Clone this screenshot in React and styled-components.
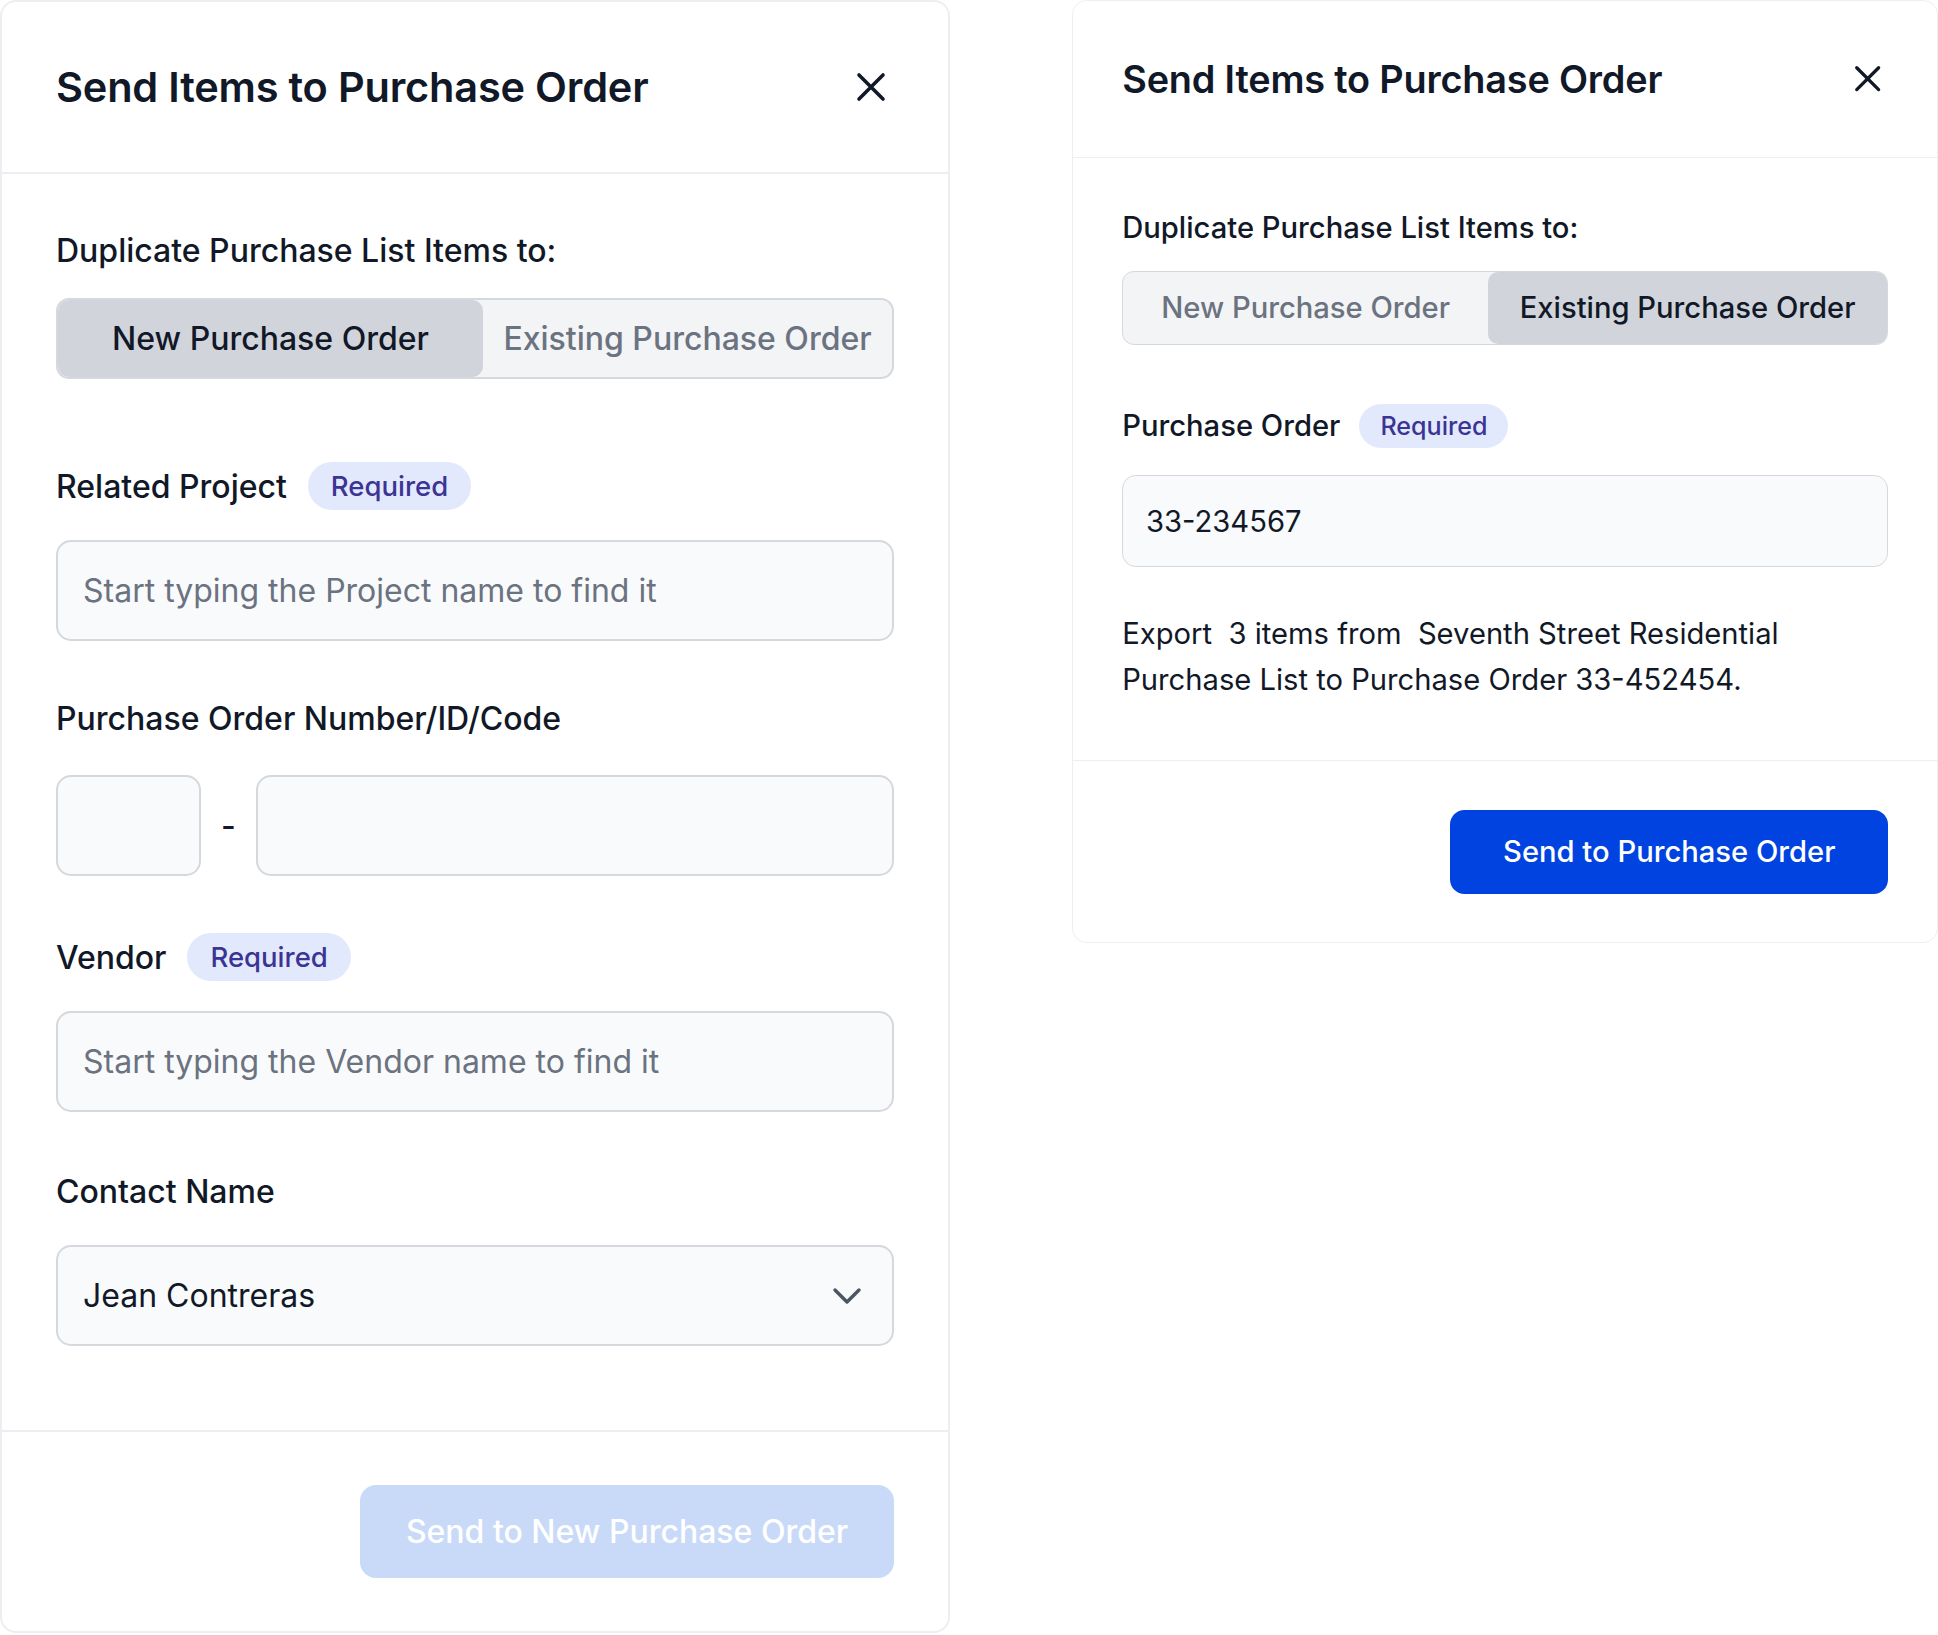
import React from "react";
import styled, { createGlobalStyle } from "styled-components";

const GlobalStyle = createGlobalStyle`
  html, body {
    margin: 0;
    padding: 0;
    background: #ffffff;
    overflow: hidden;
  }
  body {
    font-family: Inter, "Noto Sans", "Liberation Sans", sans-serif;
    color: #111827;
    -webkit-font-smoothing: antialiased;
  }
`;

const CloseIcon = () => (
  <svg width="30" height="30" viewBox="0 0 30 30" fill="none">
    <path d="M3 3 L27 27 M27 3 L3 27" stroke="#111827" strokeWidth="3.6" strokeLinecap="round" />
  </svg>
);

const ChevronIcon = () => (
  <svg width="30" height="18" viewBox="0 0 30 18" fill="none">
    <path d="M3 3 L15 15 L27 3" stroke="#4b5563" strokeWidth="3.4" strokeLinecap="round" strokeLinejoin="round" />
  </svg>
);

const summaryText =
  "Export\u00a0 3 items from\u00a0 Seventh Street Residential Purchase List to Purchase Order 33-452454.";

const NewOrderDialog = () => (
  <Panel $height={1633}>
    <Header>
      <Title>Send Items to Purchase Order</Title>
      <CloseButton aria-label="Close">
        <CloseIcon />
      </CloseButton>
    </Header>
    <Body $padBottom={84}>
      <LabelRow>
        <Label>Duplicate Purchase List Items to:</Label>
      </LabelRow>
      <Segmented $first={425} $gap={24}>
        <Segment $active>New Purchase Order</Segment>
        <Segment>Existing Purchase Order</Segment>
      </Segmented>

      <Field $top={83}>
        <LabelRow>
          <Label>Related Project</Label>
          <Badge>Required</Badge>
        </LabelRow>
        <InputBox>
          <Placeholder>Start typing the Project name to find it</Placeholder>
        </InputBox>
      </Field>

      <Field $top={53} $gap={33}>
        <LabelRow>
          <Label>Purchase Order Number/ID/Code</Label>
        </LabelRow>
        <CodeRow>
          <InputBox $width={145} />
          <Dash>-</Dash>
          <InputBox $grow />
        </CodeRow>
      </Field>

      <Field $top={57}>
        <LabelRow>
          <Label>Vendor</Label>
          <Badge>Required</Badge>
        </LabelRow>
        <InputBox>
          <Placeholder>Start typing the Vendor name to find it</Placeholder>
        </InputBox>
      </Field>

      <Field $top={55}>
        <LabelRow>
          <Label>Contact Name</Label>
        </LabelRow>
        <InputBox>
          <Value>Jean Contreras</Value>
          <ChevronIcon />
        </InputBox>
      </Field>
    </Body>
    <Footer>
      <PrimaryButton $width={534} $height={93} disabled>
        Send to New Purchase Order
      </PrimaryButton>
    </Footer>
  </Panel>
);

const ExistingOrderDialog = () => (
  <Panel $zoom={0.912} $height={1034}>
    <Header>
      <Title>Send Items to Purchase Order</Title>
      <CloseButton aria-label="Close">
        <CloseIcon />
      </CloseButton>
    </Header>
    <Body $padBottom={61}>
      <LabelRow>
        <Label>Duplicate Purchase List Items to:</Label>
      </LabelRow>
      <Segmented $first={400} $gap={24}>
        <Segment>New Purchase Order</Segment>
        <Segment $active>Existing Purchase Order</Segment>
      </Segmented>

      <Field $top={65}>
        <LabelRow>
          <Label>Purchase Order</Label>
          <Badge>Required</Badge>
        </LabelRow>
        <InputBox>
          <Value>33-234567</Value>
        </InputBox>
      </Field>

      <Summary>{summaryText}</Summary>
    </Body>
    <Footer>
      <PrimaryButton $width={480} $height={92}>
        Send to Purchase Order
      </PrimaryButton>
    </Footer>
  </Panel>
);

export default function App() {
  return (
    <>
      <GlobalStyle />
      <Page>
        <NewOrderDialog />
        <ExistingOrderDialog />
      </Page>
    </>
  );
}

const Page = styled.main`
  display: flex;
  align-items: flex-start;
  gap: 122px;
  width: 1938px;
  height: 1635px;
`;

const Panel = styled.section`
  zoom: ${p => p.$zoom || 1};
  flex: none;
  box-sizing: border-box;
  width: 950px;
  height: ${p => p.$height}px;
  display: flex;
  flex-direction: column;
  background: #ffffff;
  border: 2px solid #eceef1;
  border-radius: 16px;
`;

const Header = styled.header`
  box-sizing: border-box;
  height: 172px;
  flex: none;
  display: flex;
  align-items: center;
  justify-content: space-between;
  padding: 0 62px 0 54px;
  border-bottom: 2px solid #eceef1;
`;

const Title = styled.h2`
  margin: 0;
  font-size: 41.5px;
  font-weight: 600;
  letter-spacing: -0.2px;
  color: #111827;
`;

const CloseButton = styled.button`
  display: flex;
  align-items: center;
  justify-content: center;
  padding: 0;
  border: none;
  background: none;
  cursor: pointer;
`;

const Body = styled.div`
  flex: 1;
  display: flex;
  flex-direction: column;
  padding: 52px 54px ${p => p.$padBottom}px;
`;

const LabelRow = styled.div`
  display: flex;
  align-items: center;
  gap: 21px;
  height: 48px;
`;

const Label = styled.span`
  font-size: 32px;
  font-weight: 500;
  color: #111827;
`;

const Badge = styled.span`
  display: inline-flex;
  align-items: center;
  height: 48px;
  padding: 0 23px;
  border-radius: 24px;
  background: #e3e9fd;
  color: #3b3494;
  font-size: 27.5px;
  font-weight: 500;
`;

const Segmented = styled.div`
  margin-top: ${p => p.$gap}px;
  display: grid;
  grid-template-columns: ${p => p.$first}px 1fr;
  box-sizing: border-box;
  height: 81px;
  border: 2px solid #d5d8dd;
  border-radius: 13px;
  background: #f3f4f6;
  overflow: hidden;
`;

const Segment = styled.div`
  display: flex;
  align-items: center;
  justify-content: center;
  font-size: 32px;
  font-weight: 500;
  white-space: nowrap;
  color: ${p => (p.$active ? "#111827" : "#6b7280")};
  background: ${p => (p.$active ? "#d1d5db" : "transparent")};
  border-radius: 11px;
`;

const Field = styled.div`
  margin-top: ${p => p.$top}px;
  display: flex;
  flex-direction: column;
  gap: ${p => p.$gap || 30}px;
`;

const InputBox = styled.div`
  box-sizing: border-box;
  flex: ${p => (p.$grow ? "1 1 0" : "none")};
  width: ${p => (p.$width ? `${p.$width}px` : "auto")};
  height: 101px;
  display: flex;
  align-items: center;
  justify-content: space-between;
  padding: 0 30px 0 25px;
  background: #f9fafb;
  border: 2px solid #d5d8dd;
  border-radius: 15px;
`;

const Placeholder = styled.span`
  font-size: 32px;
  color: #6b7280;
`;

const Value = styled.span`
  font-size: 32px;
  color: #111827;
`;

const CodeRow = styled.div`
  display: flex;
  align-items: center;
`;

const Dash = styled.span`
  width: 55px;
  text-align: center;
  font-size: 32px;
  font-weight: 500;
  color: #111827;
`;

const Summary = styled.p`
  margin: 48px 0 0;
  font-size: 32px;
  line-height: 50px;
  color: #111827;
`;

const Footer = styled.footer`
  flex: none;
  display: flex;
  justify-content: flex-end;
  padding: 53px 54px 53px;
  border-top: 2px solid #eceef1;
`;

const PrimaryButton = styled.button`
  width: ${p => p.$width}px;
  height: ${p => p.$height}px;
  border: none;
  border-radius: 16px;
  font-family: inherit;
  font-size: 32px;
  font-weight: 500;
  color: #ffffff;
  background: #0043e0;
  cursor: pointer;

  &:disabled {
    background: #c9daf8;
    cursor: default;
  }
`;
